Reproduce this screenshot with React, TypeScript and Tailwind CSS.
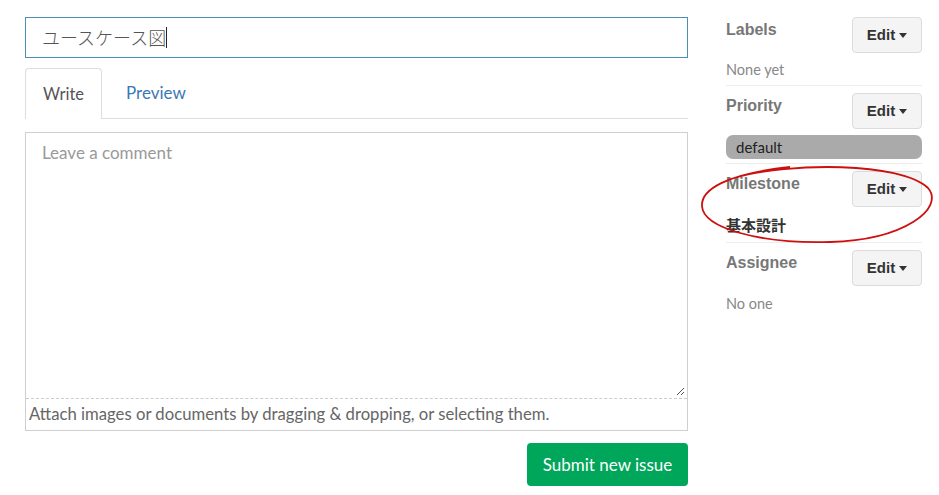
import React from 'react';

const sans = { fontFamily: 'Lato, "Noto Sans CJK JP", sans-serif' };

const EditButton: React.FC = () => (
  <button className="flex items-center gap-[4px] h-[36px] w-[70px] justify-center rounded-[4px] border border-[#dcdcdc] bg-[#f4f4f4] text-[15px] font-bold text-[#333] font-['Liberation_Sans',Arial,sans-serif]">
    Edit
    <span className="inline-block w-0 h-0 border-l-[4.5px] border-r-[4.5px] border-t-[5px] border-l-transparent border-r-transparent border-t-[#333] mt-[1px]"></span>
  </button>
);

const SideSection: React.FC<{ title: string; children: React.ReactNode; last?: boolean }> = ({ title, children, last }) => (
  <div className={`pt-[7px] ${last ? '' : 'border-b border-[#ececec]'}`}>
    <div className="flex justify-between items-start">
      <h3 className="pt-[4px] text-[16px] font-bold text-[#777] font-['Liberation_Sans',Arial,sans-serif] leading-[18px]">{title}</h3>
      <EditButton />
    </div>
    {children}
  </div>
);

export default function App() {
  return (
    <div className="relative w-[939px] h-[495px] bg-white overflow-hidden" style={sans}>
      <div className="flex pt-[17px] pl-[25px] gap-[38px]">
        {/* main column */}
        <div className="w-[663px] flex flex-col">
          <div className="h-[41px] border border-[#4a90b5] flex items-center pl-[16px] text-[18px] text-[#555] font-light" style={{ fontFamily: '"Noto Sans CJK JP", sans-serif' }}>
            ユースケース図
            <span className="inline-block w-[1px] h-[21px] bg-[#222]"></span>
          </div>

          <div className="mt-[10px] flex items-end border-b border-[#ddd] h-[51px]">
            <div className="h-[51px] w-[77px] border border-b-0 border-[#ddd] rounded-t-[4px] bg-white -mb-[1px] flex items-center justify-center text-[16.5px] text-[#555]">
              Write
            </div>
            <div className="h-[50px] flex items-center pl-[24px] text-[17px] text-[#3a78b4]">Preview</div>
          </div>

          <div className="mt-[13px] border border-[#cfcfcf] h-[299px] flex flex-col">
            <div className="relative flex-1 px-[16px] pt-[7px] text-[17px] text-[#999]">
              Leave a comment
              <svg className="absolute right-[2px] bottom-[2px]" width="10" height="10" viewBox="0 0 10 10">
                <path d="M9 2 L2 9 M9 6 L6 9" stroke="#555" strokeWidth="1" />
              </svg>
            </div>
            <div className="h-[32px] border-t border-dashed border-[#ccc] flex items-center pl-[3px] text-[16.7px] text-[#666]">
              Attach images or documents by dragging &amp; dropping, or selecting them.
            </div>
          </div>

          <div className="flex justify-end mt-[12px]">
            <button className="h-[43px] w-[161px] rounded-[4px] bg-[#00a65a] text-white text-[17px]">Submit new issue</button>
          </div>
        </div>

        {/* sidebar */}
        <div className="w-[196px] -mt-[7px]">
          <SideSection title="Labels">
            <div className="pt-[7px] pb-[5px] text-[14.5px] leading-[20px] text-[#888]">None yet</div>
          </SideSection>
          <SideSection title="Priority">
            <div className="mt-[6px] mb-[4px] h-[24px] rounded-[7px] bg-[#aaa] pl-[10px] flex items-center text-[15px] text-[#222]">default</div>
          </SideSection>
          <SideSection title="Milestone">
            <div className="pt-[8px] pb-[7px] text-[15px] leading-[20px] font-bold text-[#333]" style={{ fontFamily: '"Noto Sans CJK JP", sans-serif' }}>基本設計</div>
          </SideSection>
          <SideSection title="Assignee" last>
            <div className="pt-[8px] text-[14.5px] leading-[20px] text-[#888]">No one</div>
          </SideSection>
        </div>
      </div>

      {/* hand-drawn red annotation */}
      <svg className="absolute left-0 top-0 pointer-events-none" width="939" height="495">
        <path
          d="M734 178 C790 162, 900 162, 928 188 C945 208, 905 240, 830 242 C760 244, 703 228, 702 206 C701 190, 725 174, 790 167"
          fill="none"
          stroke="#cc1010"
          strokeWidth="1.8"
        />
      </svg>
    </div>
  );
}
